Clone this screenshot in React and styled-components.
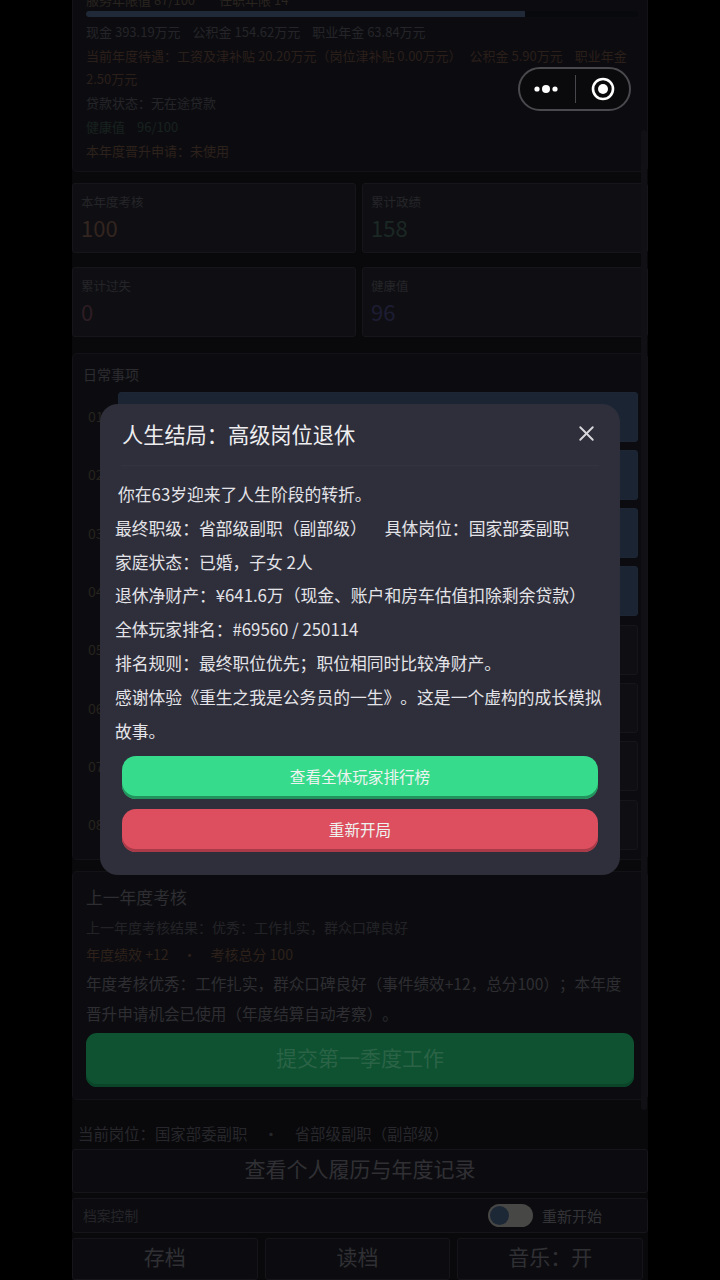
import React from 'react';
import styled, { createGlobalStyle } from 'styled-components';
import { X } from 'lucide-react';

const GlobalStyle = createGlobalStyle`
  html, body {
    margin: 0;
    padding: 0;
    background: #000;
    font-family: "Noto Sans CJK SC", "Noto Sans", sans-serif;
    text-spacing-trim: space-all;
  }
  * { box-sizing: border-box; }
`;

const Stage = styled.div`
  position: relative;
  width: 720px;
  height: 1280px;
  overflow: hidden;
  background: #000;
`;

const Column = styled.div`
  width: 576px;
  margin: -12px 0 0 72px;
  background: #09090c;
  display: flex;
  flex-direction: column;
`;

const Panel = styled.section`
  background: #0c0c10;
  border: 1px solid #131317;
  border-radius: 5px;
`;

const StatusPanel = styled(Panel)`
  padding: 0 9px 8px 13px;
  border-top: none;
`;

const InfoLine = styled.div`
  font-size: 13px;
  line-height: 23.8px;
  color: ${(p) => p.$color || '#252529'};
  white-space: nowrap;
`;

const Gap = styled.span`
  display: inline-block;
  width: ${(p) => p.$w || 12}px;
`;

const Bar = styled.div`
  height: 6px;
  margin: -1px 0 3px;
  background: #08090c;
  border-radius: 3px;
  overflow: hidden;
`;

const BarFill = styled.div`
  height: 100%;
  background: #1f2937;
`;

const StatGrid = styled.div`
  display: grid;
  grid-template-columns: 284px 286px;
  column-gap: 6px;
  row-gap: 14px;
  margin-top: 11px;
`;

const StatCard = styled.div`
  height: 70px;
  padding: 10px 8px 0;
  background: #0f0f13;
  border: 1px solid #15151a;
  border-radius: 3px;
`;

const StatLabel = styled.div`
  font-size: 12.5px;
  line-height: 16px;
  color: #252529;
`;

const StatValue = styled.div`
  margin-top: 2px;
  font-size: 22px;
  line-height: 30px;
  color: ${(p) => p.$color};
`;

const DailyPanel = styled(Panel)`
  margin-top: 16px;
  padding: 10px 9px 9px 10px;
`;

const DailyTitle = styled.div`
  font-size: 14px;
  line-height: 20px;
  color: #2c2c30;
  margin-bottom: 8px;
`;

const DailyList = styled.div`
  display: flex;
  flex-direction: column;
  gap: 8.3px;
`;

const DailyRow = styled.div`
  display: flex;
  align-items: center;
  height: 50px;
`;

const DailyNo = styled.span`
  width: 35px;
  padding: 0 0 1px 5px;
  font-size: 14px;
  color: #27231d;
`;

const DailyCard = styled.div`
  flex: 1;
  height: 100%;
  border-radius: 3px;
  background: ${(p) => (p.$done ? '#1a2433' : '#0f0f13')};
  border: 1px solid ${(p) => (p.$done ? '#1c2635' : '#15151a')};
`;

const ReviewPanel = styled(Panel)`
  margin-top: 11px;
  padding: 13px 13px 12px;
`;

const ReviewTitle = styled.div`
  font-size: 16.8px;
  line-height: 24px;
  color: #2e2e32;
`;

const ReviewLine = styled.div`
  font-size: 14px;
  line-height: 24px;
  margin-top: ${(p) => p.$mt || 3}px;
  color: ${(p) => p.$color || '#232327'};
  white-space: nowrap;
`;

const ReviewText = styled.p`
  margin: 2px 0 0;
  font-size: 15.6px;
  line-height: 30px;
  color: #2e2e32;
`;

const SubmitButton = styled.div`
  margin-top: 5px;
  height: 54px;
  padding-bottom: 5px;
  display: flex;
  align-items: center;
  justify-content: center;
  background: #0e5231;
  border-radius: 11px;
  box-shadow: inset 0 -3px 0 #0a4529;
  font-size: 21px;
  color: #2b6347;
`;

const CurrentPost = styled.div`
  margin-top: 21px;
  padding-left: 6px;
  font-size: 15.4px;
  line-height: 24px;
  color: #27272b;
  white-space: nowrap;
`;

const GhostButton = styled.div`
  height: ${(p) => p.$h || 44}px;
  padding-bottom: 5px;
  display: flex;
  align-items: center;
  justify-content: center;
  background: #0c0c10;
  border: 1px solid #15151a;
  border-radius: 3px;
  font-size: 21px;
  color: #303034;
`;

const ResumeButton = styled(GhostButton)`
  margin-top: 4px;
`;

const ArchiveBar = styled.div`
  margin-top: 5px;
  height: 35px;
  padding: 0 45px 0 10px;
  display: flex;
  align-items: center;
  justify-content: space-between;
  background: #0c0c10;
  border: 1px solid #15151a;
  border-radius: 3px;
`;

const ArchiveLabel = styled.span`
  font-size: 13.8px;
  color: #252529;
`;

const RestartGroup = styled.div`
  display: flex;
  align-items: center;
  gap: 9px;
  font-size: 15px;
  color: #333337;
`;

const Toggle = styled.div`
  width: 45px;
  height: 23px;
  padding: 2px;
  border-radius: 12px;
  background: #474845;
`;

const ToggleKnob = styled.div`
  width: 19px;
  height: 19px;
  border-radius: 50%;
  background: #1d2837;
`;

const ArchiveButtons = styled.div`
  margin-top: 5px;
  padding-right: 5px;
  display: grid;
  grid-template-columns: repeat(3, 1fr);
  gap: 7px;
`;

const Capsule = styled.div`
  position: absolute;
  left: 518px;
  top: 67px;
  width: 113px;
  height: 44px;
  display: flex;
  align-items: center;
  justify-content: space-between;
  padding: 0 14px 0 13px;
  background: #0a0a0c;
  border: 2px solid #4a4a4e;
  border-radius: 22px;
`;

const CapsuleDivider = styled.div`
  width: 1px;
  height: 28px;
  background: #48484c;
`;

const Scrollbar = styled.div`
  position: absolute;
  left: 641px;
  top: 130px;
  width: 6px;
  height: 980px;
  border-radius: 3px;
  background: #111115;
`;

const Modal = styled.div`
  position: absolute;
  left: 100px;
  top: 404px;
  width: 520px;
  height: 471px;
  padding: 15px 15px 0;
  background: #2f2f3c;
  border-radius: 18px;
`;

const ModalHead = styled.div`
  display: flex;
  align-items: center;
  justify-content: space-between;
  height: 47px;
  margin: 0 6px;
  padding: 0 0 17px 1px;
  border-bottom: 1px solid #343441;
`;

const ModalTitle = styled.h2`
  margin: 0;
  font-size: 21.2px;
  line-height: 30px;
  font-weight: 400;
  color: #eeeef0;
`;

const CloseIcon = styled(X)`
  color: #d8d8dc;
`;

const ModalBody = styled.div`
  margin-top: 12px;
`;

const ModalLine = styled.p`
  margin: 0;
  font-size: 16.8px;
  line-height: 33.8px;
  color: #e4e4e8;
  text-indent: ${(p) => (p.$indent ? 3 : 0)}px;
`;

const ModalButton = styled.div`
  height: 43px;
  margin: ${(p) => p.$mt}px 7px 0;
  padding-bottom: 3px;
  display: flex;
  align-items: center;
  justify-content: center;
  border-radius: 14px;
  font-size: 15.6px;
  color: #eef3f0;
  background: ${(p) => p.$bg};
  box-shadow: inset 0 -3px 0 ${(p) => p.$edge};
`;

const dailyRows = ['01', '02', '03', '04', '05', '06', '07', '08'];

const stats = [
  { label: '本年度考核', value: '100', color: '#33251f' },
  { label: '累计政绩', value: '158', color: '#1b2824' },
  { label: '累计过失', value: '0', color: '#2e1d24' },
  { label: '健康值', value: '96', color: '#1d1d33' },
];

export default function App() {
  return (
    <Stage>
      <GlobalStyle />
      <Column>
        <StatusPanel>
          <InfoLine $color="#2a241f">服务年限值 87/100<Gap $w={24} />任职年限 14</InfoLine>
          <Bar>
            <BarFill style={{ width: '79.5%' }} />
          </Bar>
          <InfoLine>现金 393.19万元<Gap />公积金 154.62万元<Gap />职业年金 63.84万元</InfoLine>
          <InfoLine $color="#2b1f1a">
            当前年度待遇：工资及津补贴 20.20万元（岗位津补贴 0.00万元）<Gap $w={8} />公积金 5.90万元<Gap />职业年金
          </InfoLine>
          <InfoLine $color="#2b1f1a">2.50万元</InfoLine>
          <InfoLine>贷款状态：无在途贷款</InfoLine>
          <InfoLine $color="#18221f">健康值<Gap />96/100</InfoLine>
          <InfoLine $color="#2d211b">本年度晋升申请：未使用</InfoLine>
        </StatusPanel>

        <StatGrid>
          {stats.map((s) => (
            <StatCard key={s.label}>
              <StatLabel>{s.label}</StatLabel>
              <StatValue $color={s.color}>{s.value}</StatValue>
            </StatCard>
          ))}
        </StatGrid>

        <DailyPanel>
          <DailyTitle>日常事项</DailyTitle>
          <DailyList>
            {dailyRows.map((no, i) => (
              <DailyRow key={no}>
                <DailyNo>{no}</DailyNo>
                <DailyCard $done={i < 4} />
              </DailyRow>
            ))}
          </DailyList>
        </DailyPanel>

        <ReviewPanel>
          <ReviewTitle>上一年度考核</ReviewTitle>
          <ReviewLine $mt={6}>上一年度考核结果：优秀：工作扎实，群众口碑良好</ReviewLine>
          <ReviewLine $color="#2d211a">年度绩效 +12<Gap $w={14} />·<Gap $w={14} />考核总分 100</ReviewLine>
          <ReviewText>
            年度考核优秀：工作扎实，群众口碑良好（事件绩效+12，总分100）；本年度晋升申请机会已使用（年度结算自动考察）。
          </ReviewText>
          <SubmitButton>提交第一季度工作</SubmitButton>
        </ReviewPanel>

        <CurrentPost>当前岗位：国家部委副职<Gap $w={16} />·<Gap $w={16} />省部级副职（副部级）</CurrentPost>
        <ResumeButton>查看个人履历与年度记录</ResumeButton>

        <ArchiveBar>
          <ArchiveLabel>档案控制</ArchiveLabel>
          <RestartGroup>
            <Toggle>
              <ToggleKnob />
            </Toggle>
            重新开始
          </RestartGroup>
        </ArchiveBar>

        <ArchiveButtons>
          <GhostButton $h={42}>存档</GhostButton>
          <GhostButton $h={42}>读档</GhostButton>
          <GhostButton $h={42}>音乐：开</GhostButton>
        </ArchiveButtons>
      </Column>

      <Scrollbar />

      <Capsule>
        <svg width="26" height="12" viewBox="0 0 26 12">
          <circle cx="4" cy="6" r="2.6" fill="#fff" />
          <circle cx="13" cy="6" r="4" fill="#fff" />
          <circle cx="22" cy="6" r="2.6" fill="#fff" />
        </svg>
        <CapsuleDivider />
        <svg width="24" height="24" viewBox="0 0 24 24">
          <circle cx="12" cy="12" r="10" fill="none" stroke="#fff" strokeWidth="2.6" />
          <circle cx="12" cy="12" r="5" fill="#fff" />
        </svg>
      </Capsule>

      <Modal>
        <ModalHead>
          <ModalTitle>人生结局：高级岗位退休</ModalTitle>
          <CloseIcon size={25} strokeWidth={1.8} />
        </ModalHead>
        <ModalBody>
          <ModalLine $indent>你在63岁迎来了人生阶段的转折。</ModalLine>
          <ModalLine>最终职级：省部级副职（副部级）<Gap $w={18} />具体岗位：国家部委副职</ModalLine>
          <ModalLine>家庭状态：已婚，子女 2人</ModalLine>
          <ModalLine>退休净财产：¥641.6万（现金、账户和房车估值扣除剩余贷款）</ModalLine>
          <ModalLine>全体玩家排名：#69560 / 250114</ModalLine>
          <ModalLine>排名规则：最终职位优先；职位相同时比较净财产。</ModalLine>
          <ModalLine>感谢体验《重生之我是公务员的一生》。这是一个虚构的成长模拟故事。</ModalLine>
        </ModalBody>
        <ModalButton $mt={8} $bg="#36dc8c" $edge="#23935d">查看全体玩家排行榜</ModalButton>
        <ModalButton $mt={10} $bg="#dd4f5f" $edge="#a93b49">重新开局</ModalButton>
      </Modal>
    </Stage>
  );
}
